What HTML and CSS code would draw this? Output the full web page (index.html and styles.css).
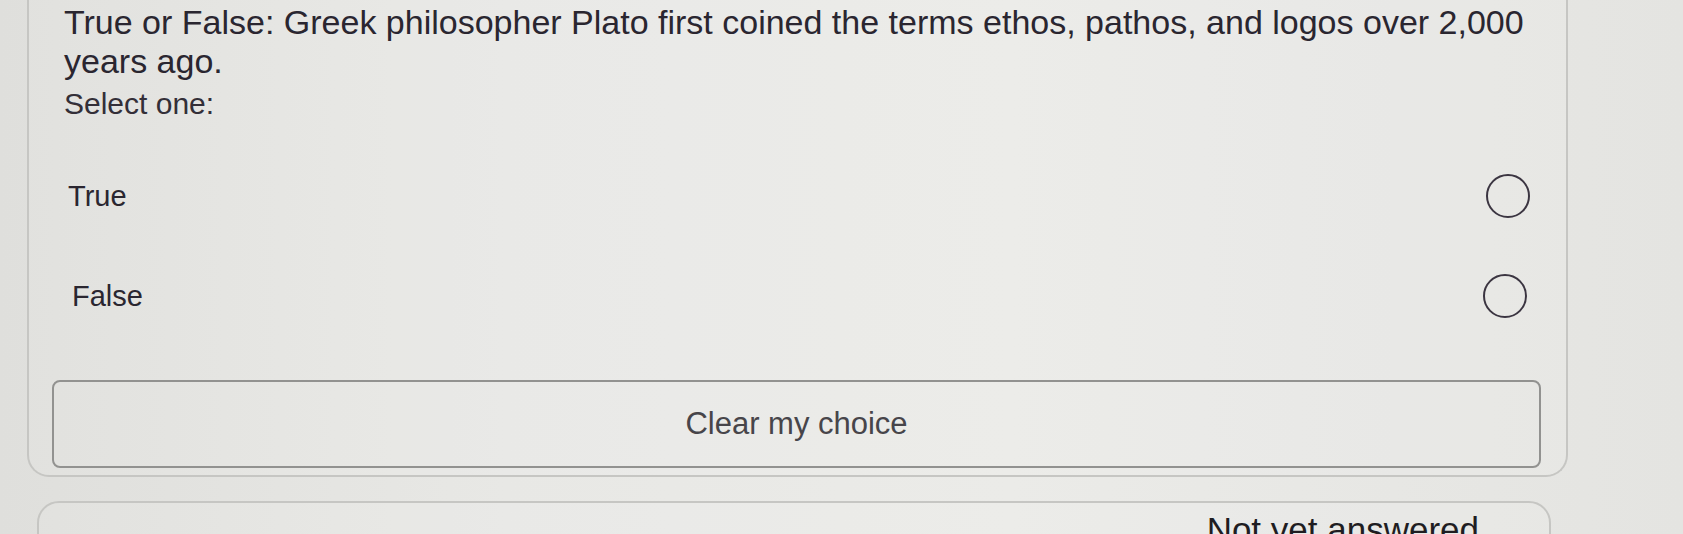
FILE: index.html
```html
<!DOCTYPE html>
<html lang="en">
<head>
  <meta charset="UTF-8" />
  <title>Quiz question</title>
  <meta name="viewport" content="width=device-width, initial-scale=1" />
  <link rel="stylesheet" href="styles.css">
</head>
<body>
  <div class="que">
    <div class="qtext">True or False: Greek philosopher Plato first coined the terms ethos, pathos, and logos over 2,000 years ago.</div>
    <div class="prompt">Select one:</div>
    <div class="answers">
      <label class="option">
        <span class="label">True</span>
        <span class="radio"></span>
      </label>
      <label class="option option-false">
        <span class="label">False</span>
        <span class="radio"></span>
      </label>
    </div>
    <button class="clear">Clear my choice</button>
  </div>

  <div class="que next">
    <div class="state">Not yet answered</div>
  </div>
</body>
</html>
```

FILE: styles.css
```css
body {
  margin: 0;
  height: 534px;
  overflow: hidden;
  background: linear-gradient(90deg, #dfdfdc 0%, #e8e8e5 30%, #ebebe8 60%, #e4e4e1 100%);
  font-family: 'Liberation Sans', Arial, sans-serif;
  color: #2a2630;
}
.que {
  margin-left: 27px;
  width: 1537px;
  border: 2px solid #c6c6c3;
  border-top: none;
  border-radius: 0 0 22px 22px;
  padding: 3px 0 7px;
  background: rgba(255, 255, 255, 0.08);
}
.qtext {
  padding: 0 30px 0 35px;
  font-size: 34px;
  line-height: 39px;
}
.prompt {
  padding: 4px 0 0 35px;
  font-size: 30px;
  line-height: 38px;
  color: #332f38;
}
.answers {
  padding: 43px 36px 0 39px;
}
.option {
  display: flex;
  align-items: center;
  justify-content: space-between;
  height: 60px;
  font-size: 29px;
}
.option:first-child {
  margin-bottom: 40px;
}
.option-false {
  padding-left: 4px;
  padding-right: 3px;
}
.radio {
  width: 40px;
  height: 40px;
  border: 2px solid #3b3541;
  border-radius: 50%;
}
.clear {
  display: block;
  margin: 54px 0 0 23px;
  width: 1489px;
  height: 88px;
  background: transparent;
  border: 2px solid #929290;
  border-radius: 8px;
  font-family: inherit;
  font-size: 31px;
  color: #47454a;
}
.next {
  margin-top: 24px;
  margin-left: 37px;
  width: 1510px;
  height: 60px;
  border: 2px solid #c6c6c3;
  border-radius: 22px 22px 0 0;
  padding: 7px 0 0;
  display: flex;
  justify-content: flex-end;
}
.state {
  padding-right: 70px;
  font-size: 35px;
  color: #1f1d22;
}
```
